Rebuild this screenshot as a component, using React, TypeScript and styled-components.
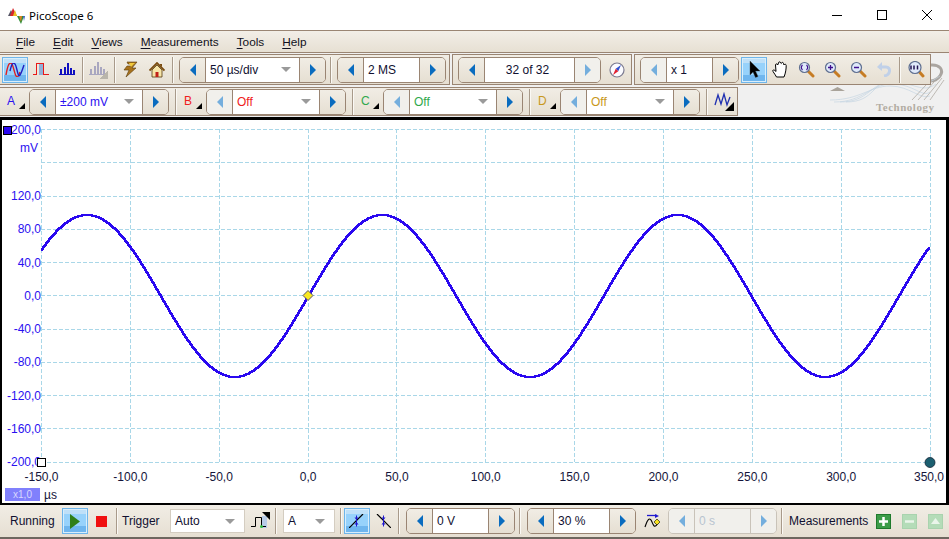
import React from "react";
import styled, { createGlobalStyle, css } from "styled-components";

const FONT = `"Liberation Sans", Arial, sans-serif`;
const BROWN = "#9a8573";

const Global = createGlobalStyle`
  html, body { margin: 0; padding: 0; background: #f0f0f0; }
  * { box-sizing: border-box; }
`;

const Page = styled.div`
  position: relative;
  width: 949px;
  height: 539px;
  overflow: hidden;
  display: flex;
  flex-direction: column;
  background: #f0f0f0;
  font-family: ${FONT};
  font-size: 12px;
  color: #101030;
`;

/* title bar */
const TitleBar = styled.div`
  height: 30px;
  background: #fff;
  display: flex;
  align-items: center;
  padding-left: 8px;
  flex: none;
`;
const TitleText = styled.span`
  margin-left: 4px;
  font-family: "Noto Sans", sans-serif;
  font-size: 11.5px;
  color: #000;
`;
const WinButtons = styled.div`
  margin-left: auto;
  display: flex;
  height: 100%;
`;
const WinButton = styled.div`
  width: 45px;
  height: 100%;
  display: flex;
  align-items: center;
  justify-content: center;
`;

/* menu */
const MenuBar = styled.div`
  height: 23px;
  flex: none;
  display: flex;
  align-items: center;
  padding-left: 16px;
  gap: 18px;
  font-size: 11.8px;
  border-top: 1px solid ${BROWN};
  border-bottom: 1px solid ${BROWN};
  background: linear-gradient(#f2eee7, #e7e0d3);
`;
const MenuItem = styled.span`
  color: #101020;
  & u { text-underline-offset: 2px; }
`;

/* toolbars */
const ToolRow = styled.div<{ $top: number; $h: number }>`
  position: relative;
  z-index: 1;
  display: flex;
  height: ${(p) => p.$h}px;
  flex: none;
  margin-top: ${(p) => p.$top}px;
`;
const Group = styled.div<{ $w: number; $mr?: number; $pl?: number }>`
  width: ${(p) => p.$w}px;
  margin-right: ${(p) => p.$mr ?? 0}px;
  padding-left: ${(p) => p.$pl ?? 0}px;
  height: 100%;
  display: flex;
  align-items: center;
  border: 1px solid ${BROWN};
  border-left-width: ${(p) => ((p.$pl ?? 0) < 3 ? 0 : 1)}px;
  background: linear-gradient(#f1ede5, #e6dfd2);
`;
const Sep = styled.div<{ $l?: number; $r?: number }>`
  width: 2px;
  height: 26px;
  flex: none;
  margin-left: ${(p) => p.$l ?? 0}px;
  margin-right: ${(p) => p.$r ?? 0}px;
  border-left: 1px solid #a89a8a;
  border-right: 1px solid #fbf9f5;
`;
const selected = css`
  border: 1px solid #6fb5ea;
  background: linear-gradient(#bfe0f8 0 20%, #97d2fb 20% 70%, #6fb6ee 70%);
  box-shadow: inset 0 0 0 1px #d8eefc;
`;
const IconBtn = styled.div<{ $w?: number; $on?: boolean; $l?: number }>`
  width: ${(p) => p.$w ?? 26}px;
  height: 26px;
  flex: none;
  margin-left: ${(p) => p.$l ?? 0}px;
  display: flex;
  align-items: center;
  justify-content: center;
  ${(p) => p.$on && selected}
`;

/* spinner */
const Spin = styled.div<{ $l?: number; $off?: boolean }>`
  display: flex;
  flex: none;
  height: 26px;
  margin-left: ${(p) => p.$l ?? 0}px;
  border: 1px solid ${(p) => (p.$off ? "#c9c3b9" : BROWN)};
  border-radius: 5px;
  overflow: hidden;
`;
const Arrow = styled.div<{ $off?: boolean }>`
  width: 25px;
  display: flex;
  align-items: center;
  justify-content: center;
  background: ${(p) => (p.$off ? "#f1f0ec" : "linear-gradient(#f1ede5, #e6dfd2)")};
  color: ${(p) => (p.$off ? "#74aedd" : "#0a6cbf")};
`;
const Field = styled.div<{ $w: number; $c?: string; $center?: boolean; $off?: boolean }>`
  width: ${(p) => p.$w}px;
  background: ${(p) => (p.$off ? "#f1f0ec" : "#fff")};
  border-left: 1px solid ${(p) => (p.$off ? "#c9c3b9" : BROWN)};
  border-right: 1px solid ${(p) => (p.$off ? "#c9c3b9" : BROWN)};
  color: ${(p) => p.$c ?? "#101030"};
  display: flex;
  align-items: center;
  justify-content: ${(p) => (p.$center ? "center" : "space-between")};
  padding: 0 8px 0 4px;
`;
const DropTri = styled.span`
  width: 0;
  height: 0;
  border-left: 5px solid transparent;
  border-right: 5px solid transparent;
  border-top: 5px solid #9a9a9a;
`;

/* channel labels */
const Channel = styled.div<{ $c: string; $l: number }>`
  position: relative;
  width: 18px;
  margin-left: ${(p) => p.$l}px;
  flex: none;
  height: 24px;
  line-height: 22px;
  color: ${(p) => p.$c};
  &::after {
    content: "";
    position: absolute;
    right: 0;
    bottom: 5px;
    border-left: 6px solid transparent;
    border-bottom: 6px solid #000;
  }
`;

/* plot */
const Plot = styled.div`
  position: relative;
  z-index: 1;
  flex: none;
  height: 388px;
  margin-top: 1px;
  border: 2px solid #000;
  border-top-width: 3px;
  border-right-width: 3px;
  background: #fff;
`;
const PlotSvg = styled.svg`
  display: block;
  font-family: ${FONT};
  font-size: 12px;
`;

/* bottom bar */
const BottomBar = styled.div`
  flex: none;
  height: 34px;
  display: flex;
  align-items: center;
  padding-left: 10px;
  border-bottom: 2px solid #6e675f;
  background: linear-gradient(#f1ede5, #e6dfd2);
`;
const Label = styled.span<{ $w: number }>`
  width: ${(p) => p.$w}px;
  flex: none;
  color: #101030;
`;
const Select = styled.div<{ $w: number; $l?: number }>`
  width: ${(p) => p.$w}px;
  margin-left: ${(p) => p.$l ?? 0}px;
  height: 24px;
  flex: none;
  background: #fff;
  border: 1px solid #d4cdc1;
  display: flex;
  align-items: center;
  justify-content: space-between;
  padding: 0 9px 0 4px;
  color: #101030;
`;
const SquareBtn = styled.div<{ $bg: string; $off?: boolean; $l?: number }>`
  width: 15px;
  height: 15px;
  flex: none;
  margin-left: ${(p) => p.$l ?? 0}px;
  background: ${(p) => p.$bg};
  border: 1px solid ${(p) => (p.$off ? "#a9d3ae" : "#1e7a2c")};
  display: flex;
  align-items: center;
  justify-content: center;
`;
const StopSquare = styled.div`
  width: 11px;
  height: 11px;
  flex: none;
  margin-left: 8px;
  background: #f01010;
`;

/* logo behind the toolbars */
const Logo = styled.svg`
  position: absolute;
  left: 820px;
  top: 56px;
  z-index: 0;
`;
const LogoText = styled.text`
  font-family: "Liberation Serif", serif;
  font-weight: 700;
  font-size: 11px;
  letter-spacing: 0.5px;
  fill: #b3ada3;
`;

const Left = () => (
  <svg width="8" height="12" viewBox="0 0 8 12"><path d="M7 0v12L1 6z" fill="currentColor" /></svg>
);
const Right = () => (
  <svg width="8" height="12" viewBox="0 0 8 12"><path d="M1 0v12l6-6z" fill="currentColor" /></svg>
);

type SpinnerProps = {
  w: number;
  text: string;
  c?: string;
  drop?: boolean;
  center?: boolean;
  l?: number;
  offL?: boolean;
  offR?: boolean;
  off?: boolean;
};
const Spinner = ({ w, text, c, drop, center, l, offL, offR, off }: SpinnerProps) => (
  <Spin $l={l} $off={off}>
    <Arrow $off={offL || off}><Left /></Arrow>
    <Field $w={w} $c={c} $center={center} $off={off}>
      <span>{text}</span>
      {drop && <DropTri />}
    </Field>
    <Arrow $off={offR || off}><Right /></Arrow>
  </Spin>
);

/* ---- icons ---- */
const AppIcon = () => (
  <svg width="17" height="17" viewBox="0 0 17 17">
    <path d="M0 9 3 3l3 6z" fill="#556" />
    <path d="M2 9 5 1l4 8z" fill="#d8262a" />
    <path d="M5 9 7 3l2 6z" fill="#e8c020" />
    <path d="M9 9h7l-3 8z" fill="#2f8f3a" />
    <path d="M11 9h3l-1 6z" fill="#e08020" />
    <path d="M15 9h2l-1 5z" fill="#3a60c0" />
  </svg>
);
const ScopeIcon = () => (
  <svg width="20" height="14" viewBox="0 0 20 14" fill="none" strokeWidth="1.400">
    <path d="M1 12C3.500 -3 6.500 -3 9 7s4 8 6 2" stroke="#e02020" />
    <path d="M5 8C7.500 -3 10 -2 12 7s3 7 7-5" stroke="#2020c0" />
  </svg>
);
const PulseIcon = () => (
  <svg width="17" height="13" viewBox="0 0 17 13" shapeRendering="crispEdges">
    <rect x="6" y="1" width="5" height="11" fill="#8fb0d8" />
    <path d="M0 11.500h3.500V.5h7v11H16" fill="none" stroke="#e81818" strokeWidth="1" />
    <path d="M10.500 .5v11" stroke="#e81818" />
  </svg>
);
const Bars = ({ c }: { c: string }) => (
  <svg width="16" height="13" viewBox="0 0 16 13" shapeRendering="crispEdges">
    <path d="M0 11.500h16" stroke={c} />
    <path d="M1 6h2v5H1zM5 4h2v7H5zM8 0h2v11H8zM11 5h2v6h-2zM14 7h2v4h-2z" fill={c} />
  </svg>
);
const GreyBars = () => (
  <svg width="20" height="18" viewBox="0 0 20 18" shapeRendering="crispEdges">
    <path d="M0 13.500h16" stroke="#a9a7c0" />
    <path d="M1 8h2v5H1zM5 5h2v8H5zM8 1h2v12H8zM11 6h2v7h-2zM14 8h2v5h-2z" fill="#a9a7c0" />
    <path d="M19 9v9h-9z" fill="#b9b5ab" />
  </svg>
);
const BoltIcon = () => (
  <svg width="15" height="17" viewBox="0 0 15 17">
    <path d="M4 1h10L9 7h4L3 16l3-7H1l3-4h5l2-2H5z" fill="#a8721c" stroke="#5c3c0c" strokeWidth=".6" />
    <path d="M6 2h6L8 6" fill="#f2c93a" />
  </svg>
);
const HomeIcon = () => (
  <svg width="16" height="16" viewBox="0 0 16 16">
    <path d="M3 8v7h10V8L8 3z" fill="#f6e5a8" stroke="#54380c" strokeWidth=".8" />
    <path d="M.5 8.500 8 1l7.500 7.500" fill="none" stroke="#7a4c10" strokeWidth="1.800" />
    <path d="M11 2h2v3l-2-2z" fill="#7a4c10" />
    <path d="M6.500 10h3v5h-3z" fill="#c02018" />
  </svg>
);
const CompassIcon = () => (
  <svg width="16" height="16" viewBox="0 0 16 16">
    <circle cx="8" cy="8" r="7" fill="#fbfbff" stroke="#7b7a90" strokeWidth="1.200" />
    <path d="M12 3 9.300 9.300 6.700 6.700z" fill="#3050d0" />
    <path d="M4 13 6.700 6.700l2.600 2.600z" fill="#e02030" />
  </svg>
);
const CursorIcon = () => (
  <svg width="11" height="17" viewBox="0 0 11 17">
    <path d="M1 0v14l3-3 2.500 5.500 2.500-1L6.500 10H11z" fill="#000" stroke="#444" strokeWidth=".4" />
  </svg>
);
const HandIcon = () => (
  <svg width="17" height="17" viewBox="0 0 17 17" fill="#fff" stroke="#000" strokeWidth="1">
    <path d="M4.500 16C3 13 .5 10.500.8 9.500c.4-1.200 2-.4 3.200 1L3.500 4c0-1.500 2-1.500 2.200 0L6.500 2c0-1.500 2-1.500 2.200 0l.6.5c.2-1.500 2-1.500 2.200 0l.5 1.500c.5-1.200 2.200-1 2.200.5 0 3-.5 7.500-2.200 11.500z" />
  </svg>
);
const Lens = ({ mark }: { mark: "plus" | "minus" | "fit" }) => (
  <svg width="17" height="17" viewBox="0 0 17 17">
    <path d="M9.500 9.500 15 15" stroke="#c67c24" strokeWidth="3" strokeLinecap="round" />
    <circle cx="6.500" cy="6.500" r="5" fill="#dfe9fa" stroke="#5f6f90" strokeWidth="1.200" />
    {mark === "plus" && <path d="M4 6.500h5M6.500 4v5" stroke="#401090" strokeWidth="1.300" />}
    {mark === "minus" && <path d="M4 6.500h5" stroke="#401090" strokeWidth="1.500" />}
    {mark === "fit" && <path d="M4.500 4C3 5.500 3 7.500 4.500 9M8.500 4c1.500 1.500 1.500 3.500 0 5" fill="none" stroke="#401090" strokeWidth="1.100" />}
  </svg>
);
const Lens100 = () => (
  <svg width="18" height="17" viewBox="0 0 18 17">
    <path d="M11 9.500 16 15" stroke="#c67c24" strokeWidth="3" strokeLinecap="round" />
    <circle cx="8" cy="6.500" r="6" fill="#dfe9fa" stroke="#5f6f90" strokeWidth="1.200" />
    <path d="M4 4.500v4M7 4.500v4M10.500 4.500v4" stroke="#201050" strokeWidth="1.500" />
  </svg>
);
const UndoIcon = () => (
  <svg width="16" height="15" viewBox="0 0 16 15" fill="none">
    <path d="M3 5h7c5 0 5 8-2 9" stroke="#c0d0e8" strokeWidth="3" />
    <path d="M6 0v9L1 5z" fill="#c0d0e8" />
  </svg>
);
const MathIcon = () => (
  <svg width="20" height="19" viewBox="0 0 20 19">
    <path d="M1 13 4 3l3 9 3-10 3 11 3-8" fill="none" stroke="#2030b0" strokeWidth="1.300" />
    <path d="M20 10v9h-9z" fill="#000" />
  </svg>
);
const TriggerIcon = () => (
  <svg width="19" height="18" viewBox="0 0 19 18">
    <path d="M11 4h5v12h-5z" fill="#b8cce8" />
    <path d="M0 14.500h4.500v-9h6v9H15" fill="none" stroke="#000" strokeWidth="1" />
    <circle cx="10.500" cy="14.500" r="1.500" fill="#30c040" />
    <path d="M19 0v8l-8-8z" fill="#000" />
  </svg>
);
const EdgeIcon = ({ down }: { down?: boolean }) => (
  <svg width="16" height="14" viewBox="0 0 16 14" style={down ? { transform: "scaleX(-1)" } : undefined}>
    <path d="M0 14 14 0" stroke="#000" strokeWidth="1.200" />
    <path d="M7.500 1.500v11" stroke="#2018d0" strokeWidth="1" />
    <path d="M5.500 3.500h4L7.500 6zM5.500 10.500h4L7.500 8z" fill="#2018d0" />
  </svg>
);
const PreTrigIcon = () => (
  <svg width="17" height="15" viewBox="0 0 17 15">
    <path d="M1 13C4 4 6 3 8 8s3 6 6 1" fill="none" stroke="#000" strokeWidth="1.100" />
    <path d="M3 1.500h10" stroke="#2018d0" strokeWidth="1.300" />
    <path d="M11 0l4 2-4 2z" fill="#2018d0" />
    <path d="M13 5l3 3-3 3-3-3z" fill="#f6e020" stroke="#000" strokeWidth=".6" />
  </svg>
);

/* ---- the trace and grid ---- */
const W = 944;
const H = 383;
const OX = 2;
const OY = 120;
const gridX = Array.from({ length: 11 }, (_, i) => 41.5 + i * 88.85);
const gridY = Array.from({ length: 11 }, (_, i) => 129.5 + i * 33.25);
const yLabels = ["200,0", "", "120,0", "80,0", "40,0", "0,0", "-40,0", "-80,0", "-120,0", "-160,0", "-200,0"];
const xLabels = ["-150,0", "-100,0", "-50,0", "0,0", "50,0", "100,0", "150,0", "200,0", "250,0", "300,0", "350,0"];

// one step per pixel column, like the real scope trace
const trace = () => {
  let d = "";
  for (let x = 41; x <= 929; x++) {
    const y = Math.round(296 - 81 * Math.sin((2 * Math.PI * (x - 308)) / 295.3));
    d += d ? `H${x}V${y}` : `M${x} ${y}`;
  }
  return d;
};

const Chart = () => (
  <PlotSvg width={W} height={H} viewBox={`${OX} ${OY} ${W} ${H}`}>
    <g stroke="#a9d7e8" strokeWidth="1" strokeDasharray="4 2" shapeRendering="crispEdges">
      {gridX.map((x) => (
        <line key={x} x1={Math.floor(x) + 0.5} x2={Math.floor(x) + 0.5} y1={129} y2={462} />
      ))}
      {gridY.map((y) => (
        <line key={y} x1={41} x2={930} y1={Math.floor(y) + 0.5} y2={Math.floor(y) + 0.5} />
      ))}
    </g>
    <g fill="#2a10f0" textAnchor="end">
      {yLabels.map((t, i) => (
        <text key={i} x={41} y={gridY[i] + 4}>{t}</text>
      ))}
      <text x={38} y={152}>mV</text>
    </g>
    <g fill="#14143a" textAnchor="middle">
      {xLabels.map((t, i) => (
        <text key={t} x={i === 10 ? 929 : gridX[i]} y={481}>{t}</text>
      ))}
    </g>
    <path d={trace()} fill="none" stroke="#2a08f0" strokeWidth="1.500" shapeRendering="crispEdges" />
    <rect x="3.500" y="126.500" width="8" height="8" fill="#2a08f0" stroke="#000" shapeRendering="crispEdges" />
    <rect x="37.500" y="458.500" width="8" height="8" fill="#fff" stroke="#000" shapeRendering="crispEdges" />
    <circle cx="930" cy="462.500" r="5" fill="#1c5f70" stroke="#123" strokeWidth=".8" />
    <path d="M308 290.500l5 5-5 5-5-5z" fill="#f8e820" stroke="#55506a" strokeWidth="1" />
    <rect x="5" y="488" width="35" height="13" fill="#8080fc" />
    <text x="22.500" y="498" fontSize="10" fill="#d8d8ff" textAnchor="middle">x1,0</text>
    <text x="44" y="499" fill="#14143a">µs</text>
  </PlotSvg>
);

export default function App() {
  return (
    <Page>
      <Global />
      <Logo width="129" height="60" viewBox="0 0 129 60">
        <path d="M110 9C120 8 124 14 120 20 117 24 113 25 110 25" fill="none" stroke="#aaa5a0" strokeWidth="3" />
        <path d="M10 35h15l-7.500-4z" fill="#a9a39a" />
        <g fill="none" stroke="#c6d6e2" strokeWidth=".7">
          <path d="M10 44c30 0 40-14 60-14s30 14 40 10" />
          <path d="M14 46c30 0 36-18 58-18s30 14 38 8" />
          <path d="M20 46c30 0 30-20 52-20s30 12 44 2" />
          <path d="M26 46c30 0 26-22 48-22s26 10 46-4" />
        </g>
        <g stroke="#a7a29a" strokeWidth=".7">
          <path d="M92 44l14-15M98 44l16-18M104 44l18-22M110 44l14-20" />
        </g>
        <LogoText x="56" y="55">Technology</LogoText>
      </Logo>

      <TitleBar>
        <AppIcon />
        <TitleText>PicoScope 6</TitleText>
        <WinButtons>
          <WinButton>
            <svg width="10" height="10" viewBox="0 0 10 10"><path d="M0 5.500h10" stroke="#000" /></svg>
          </WinButton>
          <WinButton>
            <svg width="10" height="10" viewBox="0 0 10 10"><rect x=".5" y=".5" width="9" height="9" fill="none" stroke="#000" /></svg>
          </WinButton>
          <WinButton>
            <svg width="10" height="10" viewBox="0 0 10 10"><path d="M0 0l10 10M10 0 0 10" stroke="#000" /></svg>
          </WinButton>
        </WinButtons>
      </TitleBar>

      <MenuBar>
        <MenuItem><u>F</u>ile</MenuItem>
        <MenuItem><u>E</u>dit</MenuItem>
        <MenuItem><u>V</u>iews</MenuItem>
        <MenuItem><u>M</u>easurements</MenuItem>
        <MenuItem><u>T</u>ools</MenuItem>
        <MenuItem><u>H</u>elp</MenuItem>
      </MenuBar>

      <ToolRow $top={1} $h={31}>
        <Group $w={450} $mr={2} $pl={2}>
          <IconBtn $on><ScopeIcon /></IconBtn>
          <IconBtn><PulseIcon /></IconBtn>
          <IconBtn><Bars c="#1010c0" /></IconBtn>
          <Sep $l={2} />
          <IconBtn $w={30}><GreyBars /></IconBtn>
          <Sep $r={1} />
          <IconBtn><BoltIcon /></IconBtn>
          <IconBtn $l={1}><HomeIcon /></IconBtn>
          <Sep $l={2} $r={5} />
          <Spinner w={95} text="50 µs/div" drop />
          <Sep $l={4} $r={5} />
          <Spinner w={57} text="2 MS" />
        </Group>
        <Group $w={180} $mr={2} $pl={5}>
          <Spinner w={91} text="32 of 32" center offR />
          <IconBtn $l={3}><CompassIcon /></IconBtn>
        </Group>
        <Group $w={297} $pl={5}>
          <Spinner w={47} text="x 1" offL />
          <IconBtn $l={2} $on><CursorIcon /></IconBtn>
          <IconBtn><HandIcon /></IconBtn>
          <IconBtn><Lens mark="fit" /></IconBtn>
          <IconBtn><Lens mark="plus" /></IconBtn>
          <IconBtn><Lens mark="minus" /></IconBtn>
          <IconBtn><UndoIcon /></IconBtn>
          <Sep $l={2} $r={2} />
          <IconBtn><Lens100 /></IconBtn>
        </Group>
      </ToolRow>

      <ToolRow $top={2} $h={29}>
        <Group $w={738}>
          <Channel $c="#2a10f0" $l={7}>A</Channel>
          <Spinner l={4} w={88} text="±200 mV" c="#2a10f0" drop />
          <Sep $l={6} />
          <Channel $c="#f02020" $l={7}>B</Channel>
          <Spinner l={4} w={88} text="Off" c="#f02020" drop offL />
          <Sep $l={6} />
          <Channel $c="#30a84c" $l={7}>C</Channel>
          <Spinner l={4} w={88} text="Off" c="#30a84c" drop offL />
          <Sep $l={6} />
          <Channel $c="#c8981c" $l={7}>D</Channel>
          <Spinner l={4} w={88} text="Off" c="#c8981c" drop offL />
          <Sep $l={6} />
          <IconBtn $l={3}><MathIcon /></IconBtn>
        </Group>
      </ToolRow>

      <Plot>
        <Chart />
      </Plot>

      <BottomBar>
        <Label $w={52}>Running</Label>
        <IconBtn $on>
          <svg width="10" height="15" viewBox="0 0 10 15"><path d="M0 0v15l10-7.500z" fill="#2f7f18" /></svg>
        </IconBtn>
        <StopSquare />
        <Sep $l={9} $r={4} />
        <Label $w={48}>Trigger</Label>
        <Select $w={75}>
          <span>Auto</span>
          <DropTri />
        </Select>
        <IconBtn $w={20} $l={5}><TriggerIcon /></IconBtn>
        <Sep $l={5} />
        <Select $w={52} $l={6}>
          <span>A</span>
          <DropTri />
        </Select>
        <Sep $l={5} $r={2} />
        <IconBtn $on><EdgeIcon /></IconBtn>
        <IconBtn><EdgeIcon down /></IconBtn>
        <Sep $l={2} $r={6} />
        <Spinner w={57} text="0 V" />
        <Sep $l={4} $r={6} />
        <Spinner w={57} text="30 %" />
        <IconBtn $w={20} $l={6}><PreTrigIcon /></IconBtn>
        <Spinner l={6} w={57} text="0 s" c="#b8c4d0" off />
        <Sep $l={4} $r={6} />
        <Label $w={87}>Measurements</Label>
        <SquareBtn $bg="#3c9c48">
          <svg width="9" height="9" viewBox="0 0 9 9"><path d="M4.500 0v9M0 4.500h9" stroke="#fff" strokeWidth="2.500" /></svg>
        </SquareBtn>
        <SquareBtn $l={11} $bg="#b4dcb8" $off>
          <svg width="9" height="9" viewBox="0 0 9 9"><path d="M0 4.500h9" stroke="#eaf5ea" strokeWidth="2.500" /></svg>
        </SquareBtn>
        <SquareBtn $l={11} $bg="#b4dcb8" $off>
          <svg width="9" height="9" viewBox="0 0 9 9"><path d="M4.500 1 9 7H0z" fill="#eaf5ea" /></svg>
        </SquareBtn>
      </BottomBar>
    </Page>
  );
}
